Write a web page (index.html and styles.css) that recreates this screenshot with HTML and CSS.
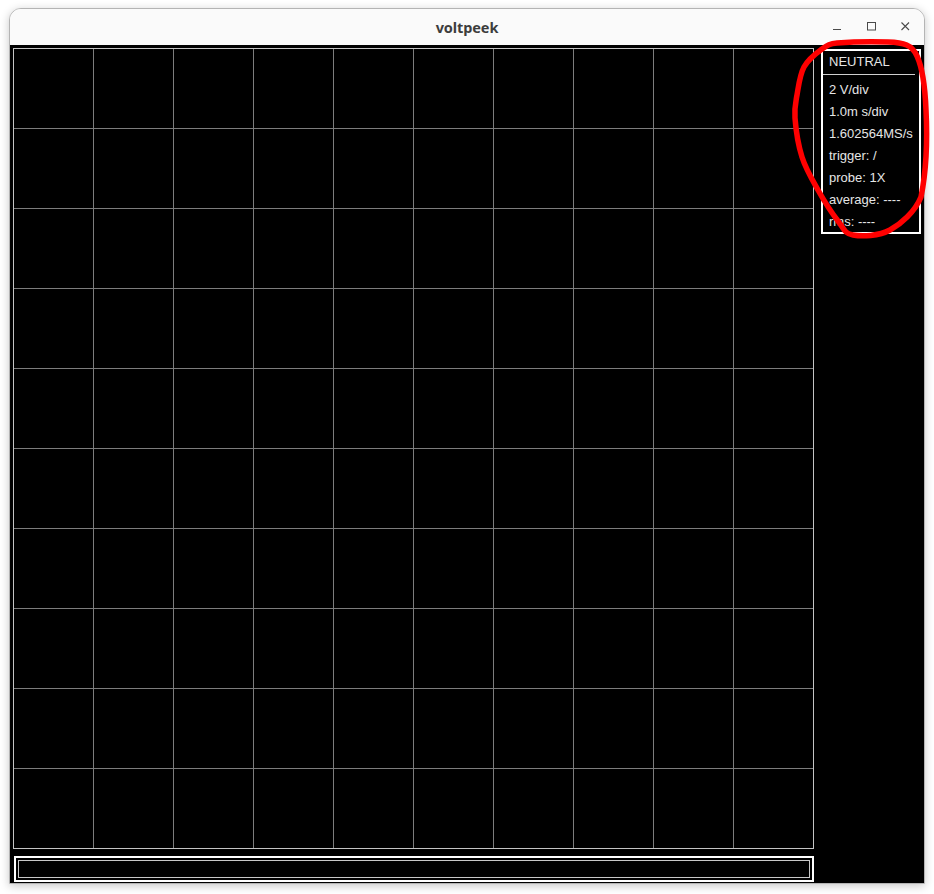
FILE: index.html
```html
<!DOCTYPE html>
<html>
<head>
<meta charset="utf-8">
<title>voltpeek</title>
<link rel="stylesheet" href="styles.css">
</head>
<body>
<div class="window">
  <div class="titlebar">
    <span class="title">voltpeek</span>
    <div class="controls">
      <svg class="ctl" width="12" height="12" viewBox="0 0 12 12"><line x1="2" y1="9.5" x2="10" y2="9.5" stroke="#4a4a4a" stroke-width="1"/></svg>
      <svg class="ctl" width="12" height="12" viewBox="0 0 12 12"><rect x="2.5" y="2.5" width="8" height="7.5" fill="none" stroke="#4a4a4a" stroke-width="1"/></svg>
      <svg class="ctl" width="12" height="12" viewBox="0 0 12 12"><path d="M2.5 2.5 L10 10 M10 2.5 L2.5 10" stroke="#4a4a4a" stroke-width="1.1"/></svg>
    </div>
  </div>
  <div class="content">
    <div class="left">
      <svg class="scope" width="801" height="801" viewBox="0 0 801 801">
        <path d="M80.5 0V801M160.5 0V801M240.5 0V801M320.5 0V801M400.5 0V801M480.5 0V801M560.5 0V801M640.5 0V801M720.5 0V801M0 80.5H801M0 160.5H801M0 240.5H801M0 320.5H801M0 400.5H801M0 480.5H801M0 560.5H801M0 640.5H801M0 720.5H801" stroke="#7c7c7c" stroke-width="1" fill="none"/>
        <rect x="0.5" y="0.5" width="800" height="800" fill="none" stroke="#c4c4c4" stroke-width="1"/>
      </svg>
      <div class="cmdbar"><div class="cmdinner"></div></div>
    </div>
    <div class="panel">
      <div class="panel-head">NEUTRAL</div>
      <div class="panel-body">
        <div class="row">2 V/div</div>
        <div class="row">1.0m s/div</div>
        <div class="row">1.602564MS/s</div>
        <div class="row">trigger: /</div>
        <div class="row">probe: 1X</div>
        <div class="row">average: ----</div>
        <div class="row">rms: ----</div>
      </div>
    </div>
  </div>
</div>
<svg class="annotation" width="934" height="894" viewBox="0 0 934 894">
  <path d="M837 43 C850 42 872 41.5 888 42 C904 42.5 912 45 917 56 C922 67 925 85 926 110 C927 130 927.5 165 921 197 C914.8 212 901.3 223.7 890 230 C878.7 236.3 861.7 236.5 853 235 C844.3 233.5 843.8 228.5 838 221 C832.2 213.5 824 200.7 818 190 C812 179.3 805.8 169 802 157 C798.2 145 795.8 128.3 795 118 C794.2 107.7 795.5 103.5 797 95 C798.5 86.5 799.8 74.7 804 67 C808.2 59.3 816.5 53 822 49 C827.5 45 830 43.5 837 43 Z" fill="none" stroke="#ff0000" stroke-width="5.5" stroke-linejoin="round"/>
</svg>
</body>
</html>
```
FILE: styles.css
```css
html, body {
  margin: 0;
  padding: 0;
  background: #ffffff;
}
body {
  width: 934px;
  height: 894px;
  position: relative;
  overflow: hidden;
  font-family: "Liberation Sans", Arial, sans-serif;
}
.window {
  position: relative;
  margin: 8px 0 0 9px;
  width: 916px;
  height: 876px;
  box-sizing: border-box;
  border: 1px solid #b4b4b4;
  border-radius: 12px 12px 0 0;
  background: #fafafa;
  box-shadow: 0 2px 10px rgba(0, 0, 0, 0.22);
  display: flex;
  flex-direction: column;
}
.titlebar {
  height: 36px;
  flex: none;
  position: relative;
  display: flex;
  align-items: center;
  justify-content: center;
  border-radius: 11px 11px 0 0;
  background: #fafafa;
}
.title {
  font-family: "Noto Sans", "DejaVu Sans", sans-serif;
  font-weight: bold;
  font-size: 14.5px;
  color: #3d3d3d;
  letter-spacing: -0.1px;
}
.controls {
  position: absolute;
  right: 13px;
  top: 11px;
  display: flex;
  gap: 22px;
}
.ctl {
  display: block;
}
.content {
  flex: 1;
  background: #000;
  display: flex;
  padding: 3px 3px 1px 3px;
  gap: 7px;
  align-items: flex-start;
}
.left {
  display: flex;
  flex-direction: column;
  gap: 7px;
}
.scope {
  display: block;
}
.cmdbar {
  margin-left: 1px;
  width: 800px;
  height: 26px;
  box-sizing: border-box;
  border: 2px solid #ffffff;
  padding: 2px;
}
.cmdinner {
  height: 100%;
  box-sizing: border-box;
  border: 1px solid #c8c8c8;
}
.panel {
  margin-top: 1px;
  width: 100px;
  height: 185px;
  box-sizing: border-box;
  border: 2px solid #ffffff;
  color: #e6e6e6;
  font-size: 13px;
  overflow: hidden;
}
.panel-head {
  height: 23px;
  line-height: 22px;
  padding: 0 6px;
  margin-right: 4px;
  border-bottom: 1px solid #cfcfcf;
}
.panel-body {
  padding: 4px 0 0 6px;
}
.row {
  height: 22px;
  line-height: 22px;
  white-space: nowrap;
}
.annotation {
  position: absolute;
  left: 0;
  top: 0;
  pointer-events: none;
}
```
